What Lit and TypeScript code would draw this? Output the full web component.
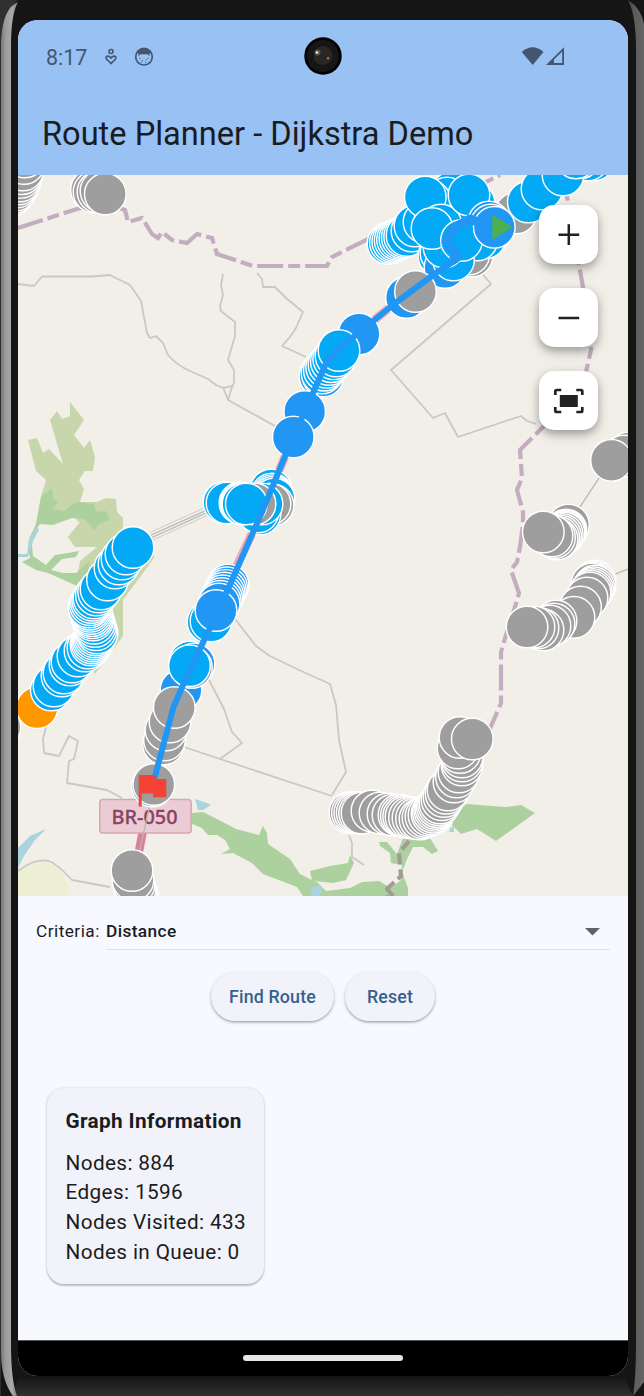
import { LitElement, html, svg, css } from "lit";
import { customElement } from "lit/decorators.js";

const SKY = "#03a9f4";
const BLUE = "#2196f3";
const GRAY = "#9e9e9e";
const ORANGE = "#ff9800";

type Run = { color: string; pts: [number, number, number?][] };

// Each run is painted in order; the optional third value subdivides the step
// from the previous point, which packs the markers tightly together.
const RUNS: Run[] = [
  { color: GRAY, pts: [[12, 195], [16, 190, 2], [20, 181, 3], [23, 170, 3], [25, 157, 2]] },
  { color: GRAY, pts: [[91.5, 190], [94, 192], [98, 192], [101, 191], [105.3, 194]] },

  { color: GRAY, pts: [[583, 160], [577, 158], [516, 213], [472, 256], [469, 254], [487, 237]] },
  { color: SKY, pts: [[594, 160], [588, 160], [580, 158], [528.3, 202], [542, 189], [563, 175], [576, 158]] },
  { color: SKY, pts: [[485, 238], [477, 240], [474, 203], [470, 214]] },
  { color: SKY, pts: [[459, 184], [457, 190, 2], [451, 193], [447, 198]] },
  { color: SKY, pts: [[388, 243.5], [407, 235.5, 8], [412, 231, 1], [415, 226], [424, 222]] },
  { color: SKY, pts: [[430, 201], [425.3, 197], [441, 225], [469, 195]] },
  { color: SKY, pts: [[439, 256], [441, 253]] },
  { color: BLUE, pts: [[445, 267.5]] },
  { color: SKY, pts: [[453.5, 260], [444, 247], [432, 228.5]] },
  { color: BLUE, pts: [[489, 222], [491, 225]] },
  { color: SKY, pts: [[461.5, 240.5]] },
  { color: BLUE, pts: [[494.3, 227.3]] },

  { color: BLUE, pts: [[406.5, 297.5]] },
  { color: GRAY, pts: [[415.5, 291.5]] },
  { color: BLUE, pts: [[359, 334], [320, 376], [323, 376]] },
  { color: SKY, pts: [[322, 373], [336, 356, 6], [339, 350.5]] },
  { color: BLUE, pts: [[304.7, 411.5], [293.3, 437]] },

  { color: SKY, pts: [[271, 490], [272, 494], [274, 499, 3]] },
  { color: GRAY, pts: [[273, 505], [270, 504]] },
  { color: SKY, pts: [[260, 514], [258, 512], [262, 504]] },
  { color: GRAY, pts: [[255, 504]] },
  { color: SKY, pts: [[224, 502.5], [227, 503], [240, 503], [243, 504, 3], [246.3, 504]] },

  { color: GRAY, pts: [[0, 727]] },
  { color: ORANGE, pts: [[37, 707.7]] },
  { color: SKY, pts: [[51.3, 690], [54, 686], [62, 676], [64, 673], [70, 665], [72, 662], [78, 656], [85, 651], [91, 645, 2], [97, 633, 6], [93, 620, 4], [89, 607, 6], [94, 598, 4], [101, 589, 3], [107.5, 580], [115, 568], [119, 564], [122, 559], [126, 554], [133, 547.5]] },

  { color: BLUE, pts: [[228, 585], [219, 604, 7]] },
  { color: SKY, pts: [[208, 622], [211, 621]] },
  { color: BLUE, pts: [[216, 610.5]] },
  { color: SKY, pts: [[190, 662]] },
  { color: BLUE, pts: [[194, 664], [181, 690]] },
  { color: GRAY, pts: [[191.5, 667.5]] },
  { color: SKY, pts: [[189.5, 665.7]] },
  { color: GRAY, pts: [[163.5, 744], [164.5, 740], [166, 730], [170, 722], [174.3, 707.5]] },
  { color: BLUE, pts: [[152.5, 786]] },
  { color: GRAY, pts: [[153.8, 784.5]] },

  { color: GRAY, pts: [[138, 897], [135, 889, 3], [133, 880, 2], [132, 870.5]] },

  { color: GRAY, pts: [[628, 453], [624, 456], [611.5, 460.3]] },
  { color: GRAY, pts: [[568.5, 525], [566, 530], [564, 533, 3], [557, 539, 4], [552, 536, 2], [543.3, 532]] },
  { color: GRAY, pts: [[595, 581], [592, 584, 3], [595, 586], [590, 593, 4], [587, 598], [580.5, 607], [574, 617.3], [556, 621], [554, 624], [550, 626], [543, 630], [538, 628], [534, 627], [527, 627]] },

  { color: GRAY, pts: [[350, 812.5], [362, 813, 5], [372, 811], [380, 813], [388, 814], [393, 815], [399, 815], [406, 817, 3], [420, 819, 4], [432, 814, 4], [440, 803, 6], [448, 790, 4], [454, 782], [459, 772, 2], [462, 765], [462, 757, 2], [458, 748, 2], [460, 737.5], [472.3, 739]] },
];

function expand(run: Run) {
  const out: [number, number][] = [];
  let prev: [number, number] | null = null;
  for (const [x, y, n = 1] of run.pts) {
    if (prev) {
      for (let i = 1; i < n; i++) {
        out.push([prev[0] + ((x - prev[0]) * i) / n, prev[1] + ((y - prev[1]) * i) / n]);
      }
    }
    out.push([x, y]);
    prev = [x, y];
  }
  return out.map(([x, y]) => svg`<circle cx=${x} cy=${y} r="20.8" fill=${run.color}></circle>`);
}

@customElement("route-map")
class RouteMap extends LitElement {
  static styles = css`
    :host { display: grid; height: 721px; background: #f2efe9; overflow: hidden; }
    .canvas, .controls { grid-area: 1 / 1; }
    .canvas { display: block; width: 610px; height: 721px; }
    .minor { fill: none; stroke: #c8c8c6; stroke-width: 1.8; stroke-linejoin: round; }
    .thin { fill: none; stroke: #b5b5b3; stroke-width: 1.3; }
    .verge { fill: none; stroke: #d3d1cd; stroke-width: 1.2; }
    .border { fill: none; stroke: #c4adc0; stroke-width: 4.2; stroke-dasharray: 26 5 12 5; }
    .border-dim { fill: none; stroke: #a39b93; stroke-width: 4.2; stroke-dasharray: 11 5; }
    .wood { fill: #add19e; }
    .scrub { fill: #c8d7ab; }
    .clearing { fill: #f2efe9; }
    .water { fill: #aad3df; }
    .farm { fill: #eef0d5; }
    .highway { fill: none; stroke: #f0a9b3; stroke-width: 8.5; }
    .highway-south { fill: none; stroke: #dc8095; stroke-width: 8.5; }
    .nodes { stroke: #fff; stroke-width: 1.45; }
    .route { fill: none; stroke: #2196f3; stroke-width: 6; stroke-linejoin: round; }
    .route-start { stroke-width: 9; }
    .shield { fill: #ecccd4; stroke: #d8a7b3; stroke-width: 1.6; }
    .shield-text { font: 500 19.5px "Noto Sans", sans-serif; fill: #894363; stroke: #894363; stroke-width: .3; }
    .controls { justify-self: end; display: flex; flex-direction: column; gap: 24px; padding: 30px 30px 0 0; z-index: 1; height: max-content; }
    .control { display: grid; place-items: center; width: 59px; height: 59px; border: 0; padding: 0; border-radius: 15px; background: #fff; box-shadow: 0 4px 7px rgba(0,0,0,.2), 0 6px 14px rgba(0,0,0,.13), 0 1px 14px rgba(0,0,0,.07); }
    .glyph { width: 36px; height: 36px; display: block; }
  `;

  render() {
    return html`
      <svg class="canvas" viewBox="18 175 610 721">
        <path class="farm" d="M18 872Q28 861 40 861Q64 864 69 890L68 896H18Z"></path>
        <path class="water" d="M18 848L30 836L46 829L35 840L24 856L18 868Z"></path>
        <path class="scrub" d="M28 440L37 438 43 453 49 449 63 464 50 420 57 411 62 419 70 416 70 402 84 420 74 435 84 448 90 440 95 457 93 471H85L79 480 84 489 80 502H97L106 498 116 499 117 512 123 518V545L155 556 149 565 123 600V636L95 674 85 660 73 604 80 561 97 547 75 547 67 536 78 521 71 514H47L36 525 41 496 46 480 36 471Z"></path>
        <path class="clearing" d="M36 526Q50 517 66 520L80 522 67 538 73 547 94 547 80 561 72 572 61 572 48 567 65 554 79 552 78 555 62 557 46 569 32 555 31 540Z"></path>
        <path class="wood" d="M41 497L52 488 53 498 58 502 52 509 64 511 70 506 77 502 94 504 96 512 106 511 110 520 99 524 94 530 85 519 72 518 53 525 40 524 35 531 32 545 33 556 46 565 55 555 68 553 79 551 76 557 62 559 51 570 63 573 76 573 90 560 86 580 77 586 48 573 36 570 22 562 30 558 28 549 29 539 36 524Z"></path>
        <path class="water" d="M37 526L39 530L33 541L30 550L28 557H18V554H27L29 540Z"></path>
        <path class="wood" d="M192 813L203 812 215 818 236 829 259 835 263 826 267 833 268 844 290 859 300 874 318 883 326 891 350 888 362 882 379 881 391 888 401 880 402 865 391 863 390 853 380 846 379 842 387 842 397 854 403 838H430L438 851 432 854 423 847H413L407 859 402 872 408 888V896H303L297 887 263 874 252 863 233 853 221 854 230 849 225 840 217 835 208 835 202 828 192 824Z"></path>
        <path class="wood" d="M454 812L467 804 505 807 521 805 535 813 496 841 477 829 461 834 452 825Z"></path>
        <path class="wood" d="M310 871L330 866 348 863 350 855 354 863 346 880 333 883 312 881 311 876Z"></path>
        <path class="water" d="M195 799L207 803L211 805L203 810L198 810ZM310 887L322 886L320 896H312ZM450 828L454 826V832H449Z"></path>

        <g class="minor">
          <path d="M18 284L34 286 42 276.500H92L110 275 130 285 141 301 147 333 150 338 156 336 163 343 168 355Q178 366 190 371L208 379 216 385 223 388 232 386 M223 387L228 400 232 387 234 383 234 370 228 360 235 336V322L221 311 220 306 223 295 221 285 223 274 M228 400L293 436 M257 273L262 279 263 287 275 287 286 298 303 312 296 328 290 337 282 346 306 357"></path>
          <path d="M478 269L491 284 391 370 433 418 445 413 458 437 521 416 527 421 536 424"></path>
          <path d="M46 727L43 739 44 753 59 756 69 736 78 741 74 759 69 761 67 783 107 790 122 798"></path>
          <path d="M235 619L256 646 270 656 299 670 330 684 336 705 339 740 346 772 332 795 M209 680L224 709 232 732 242 743 220 759 M184 747L220 759 332 796 M349 835L352 843V857L364 865"></path>
          <path d="M18 871Q35 858 49 861 57 864 72 880L110 887"></path>
        </g>
        <path class="verge" d="M150 532.500L214 503.500M153 540L218 510.500"></path>
        <path class="thin" d="M150 535.500L215 506.500M152 537.500L216 508.500M568 525L611 460M595 582L628 569"></path>

        <path class="border" d="M18 228L77 209 105 203 125 210 128 222 142 218 152 234 158 238 162 232 172 240 187 243 197 234 212 238 217 254 253 266H327L332 257 370 238 M470 190L500 175"></path>
        <path class="border" d="M563 175L567 197 579 265 583 287 593 333 591 350 586 372 575 400 542 428 520 450 522 478 517 490 523 512V524L520 547 517 562 511 570 519 593 515 607 505 638 501 652V703L489 731"></path>
        <path class="border-dim" d="M409 841L399 853 401 876 387 889V896 M387 889L393 896"></path>

        <path class="highway" d="M154 780L173 707 216 610 262 512 293 437 320 370 338 351 356 335 394 304 460 257"></path>
        <path class="highway-south" d="M145 820L135 872"></path>
        <rect class="shield" x="99.800" y="799.500" width="91.300" height="33.500" rx="3"></rect>
        <text class="shield-text" x="111.500" y="823.700" textLength="66" lengthAdjust="spacingAndGlyphs">BR-050</text>
        <path class="thin" d="M153 790L135 872"></path>

        <g class="nodes">${RUNS.map(expand)}</g>

        <path class="route" d="M154 780L173.500 707 187 676 210 628 232 580 262 512 293 437 305 411 321 375 327 361 337 350 356 335 394 304 436 273 459 258"></path>
        <path class="route route-start" d="M452 261L458 256 446 242 452 230 459 225 470 219 480 223 494 227"></path>
        <path d="M492.300 214.500V240L512.500 227Z" fill="#4caf50"></path>
        <path d="M138.700 775H155.500L156.500 779H166.300V797.300H153V793.500H141.700V806.500H138.700Z" fill="#f44336"></path>
      </svg>
      <div class="controls">
        <button class="control" aria-label="Zoom in">
          <svg class="glyph" viewBox="0 0 36 36"><path d="M7.500 17.700H28.200M17.800 7.300V28" stroke="#222" stroke-width="2.500"></path></svg>
        </button>
        <button class="control" aria-label="Zoom out">
          <svg class="glyph" viewBox="0 0 36 36"><path d="M7.500 18H28.200" stroke="#222" stroke-width="2.500"></path></svg>
        </button>
        <button class="control" aria-label="Fit to screen">
          <svg class="glyph" viewBox="0 0 36 36">
            <path d="M8.800 12H26.800V24H8.800Z" fill="#222"></path>
            <path d="M4.300 12V8.500Q4.300 7 5.800 7H10.300M25.300 7H29.800Q31.300 7 31.300 8.500V12M31.300 24V27.500Q31.300 29 29.800 29H25.300M10.300 29H5.800Q4.300 29 4.300 27.500V24" fill="none" stroke="#222" stroke-width="2.700"></path>
          </svg>
        </button>
      </div>
    `;
  }
}

@customElement("app-root")
class AppRoot extends LitElement {
  static styles = css`
    :host { display: grid; width: 644px; height: 1396px; overflow: hidden; background: #161616; font-family: Roboto, sans-serif; color: #191c20; }
    * { box-sizing: border-box; }
    .shell, .screen { grid-area: 1 / 1; }
    .shell { width: 644px; height: 1396px; display: block; }
    .screen { margin: 20px 16px 20px 18px; width: 610px; height: 1356px; border-radius: 20px; overflow: hidden; background: #f8f9ff; display: flex; flex-direction: column; z-index: 1; }
    .header { height: 155px; background: #98c1f4; display: flex; flex-direction: column; }
    .status { height: 72px; display: grid; grid-template-columns: 1fr 38px 1fr; align-items: center; }
    .status-left { display: flex; align-items: center; padding: 2px 0 0 28px; color: #44566f; }
    .clock { font-size: 21.400px; width: 57px; }
    .ico-person { width: 14px; height: 18px; margin: 0 16px 0 1px; }
    .ico-face { width: 20px; height: 20px; }
    .camera { width: 38px; height: 38px; }
    .status-right { display: flex; justify-content: flex-end; padding-right: 63px; }
    .signals { width: 44px; height: 20px; }
    .title { margin: 0; padding: 2px 0 0 24px; font-size: 32.600px; font-weight: 400; line-height: 81px; height: 83px; white-space: nowrap; }
    .criteria { display: flex; margin: 13px 18px 0; height: 41px; font-size: 17.300px; letter-spacing: .45px; }
    .label { width: 70px; line-height: 45px; white-space: nowrap; }
    .select { flex: 1; display: flex; justify-content: space-between; border-bottom: 1px solid #dfe0e4; padding-right: 9px; font-weight: 500; line-height: 44px; letter-spacing: .38px; }
    .caret { width: 17px; height: 9px; margin-top: 18px; }
    .actions { display: flex; justify-content: center; gap: 11px; margin-top: 22px; }
    .action { height: 49px; border: 0; border-radius: 25px; padding: 0; background: #f2f3fa; color: #36618e; font: 500 17.800px Roboto, sans-serif; letter-spacing: .15px; box-shadow: 0 1.500px 2px rgba(0,0,0,.25), 0 1px 4px rgba(0,0,0,.12); }
    .find { width: 123px; }
    .reset { width: 90px; }
    .card { margin: 67px 0 0 29px; width: 217px; height: 196px; border-radius: 17px; background: #f2f3fa; padding: 19px 18.500px; box-shadow: 0 1.500px 2px rgba(0,0,0,.22), 0 0 3px rgba(0,0,0,.12); font-size: 20.760px; line-height: 29.700px; letter-spacing: .37px; white-space: nowrap; }
    .card-title { margin: 0 0 12px; font-size: 20.760px; font-weight: 700; letter-spacing: .35px; }
    .navbar { margin-top: auto; height: 36px; background: #000; border-top: 1px solid #55565a; display: grid; justify-items: center; align-items: start; padding-top: 14px; }
    .handle { width: 160px; height: 6px; border-radius: 3px; background: #e8e6e8; }
  `;

  render() {
    return html`
      <svg class="shell" viewBox="0 0 644 1396">
        <defs>
          <linearGradient id="l"><stop offset="0" stop-color="#777"></stop><stop offset=".25" stop-color="#999"></stop><stop offset=".65" stop-color="#aaa"></stop><stop offset="1" stop-color="#777"></stop></linearGradient>
          <linearGradient id="r"><stop offset="0" stop-color="#444"></stop><stop offset=".4" stop-color="#5c5c5c"></stop><stop offset="1" stop-color="#666"></stop></linearGradient>
          <linearGradient id="b" x1="0" y1="0" x2="0" y2="1"><stop offset="0" stop-color="#171717"></stop><stop offset="1" stop-color="#303030"></stop></linearGradient>
        </defs>
        <rect width="644" height="1396" fill="#151515"></rect>
        <path d="M19 1378H625L633 1396H11Z" fill="url(#b)"></path>
        <path d="M0 0H18Q2 12 1 45V1396H0Z" fill="#303030"></path>
        <path d="M18 2Q11 15 11 45V1345Q11 1380 17 1396H13Q1 1380 1 1352V40Q3 8 18 2Z" fill="url(#l)"></path>
        <path d="M628 0Q641 8 644 24V1382L633 1396Q636 1376 636 1345V50Q636 15 628 0Z" fill="url(#r)"></path>
      </svg>
      <div class="screen">
        <div class="header">
          <div class="status">
            <div class="status-left">
              <span class="clock">8:17</span>
              <svg class="ico-person" viewBox="0 0 14 18" fill="none" stroke="#44566f" stroke-width="1.600"><circle cx="7" cy="3.500" r="2"></circle><path d="M7 15.500L2.700 11.200Q1.200 9.300 3 8.300Q5 7.500 7 10Q9 7.500 11 8.300Q12.800 9.300 11.300 11.200Z"></path></svg>
              <svg class="ico-face" viewBox="0 0 20 20"><circle cx="10" cy="9.700" r="8.300" fill="none" stroke="#44566f" stroke-width="1.700"></circle><path d="M4 4Q10-.5 16 4L15.500 9 13.500 7.300H6.500L4.500 9Z" fill="#44566f"></path><path d="M5.500 11.500h1M13.500 11.500h1M8 13.500h1M11.500 13h1M7 15h1M11 15.500h1" stroke="#44566f" stroke-width="1"></path></svg>
            </div>
            <svg class="camera" viewBox="0 0 38 38"><circle cx="19" cy="19" r="18.700" fill="#000"></circle><circle cx="19" cy="19" r="16" fill="#161616"></circle><circle cx="19" cy="18.500" r="9.500" fill="#2b2626"></circle><circle cx="13.500" cy="15.500" r="3" fill="#5c5550"></circle><circle cx="13" cy="15.500" r="1.200" fill="#eef3e6"></circle><circle cx="24" cy="21.300" r="1.200" fill="#b9772e"></circle></svg>
            <div class="status-right">
              <svg class="signals" viewBox="0 0 44 20"><path d="M.8 6Q11.500-3.300 22.500 6L11.700 19Z" fill="#44566f"></path><path d="M25 19L43 1.300V19Z" fill="#44566f"></path><path d="M33 13.600L41.200 5.500V17H33Z" fill="#98c1f4"></path></svg>
            </div>
          </div>
          <h1 class="title">Route Planner - Dijkstra Demo</h1>
        </div>
        <route-map></route-map>
        <div class="criteria">
          <span class="label">Criteria:</span>
          <div class="select"><span>Distance</span><svg class="caret" viewBox="0 0 17 9"><path d="M1 1H16L8.500 8.500Z" fill="#616265"></path></svg></div>
        </div>
        <div class="actions">
          <button class="action find">Find Route</button>
          <button class="action reset">Reset</button>
        </div>
        <div class="card">
          <h2 class="card-title">Graph Information</h2>
          <div>Nodes: 884</div>
          <div>Edges: 1596</div>
          <div>Nodes Visited: 433</div>
          <div>Nodes in Queue: 0</div>
        </div>
        <div class="navbar"><div class="handle"></div></div>
      </div>
    `;
  }
}
